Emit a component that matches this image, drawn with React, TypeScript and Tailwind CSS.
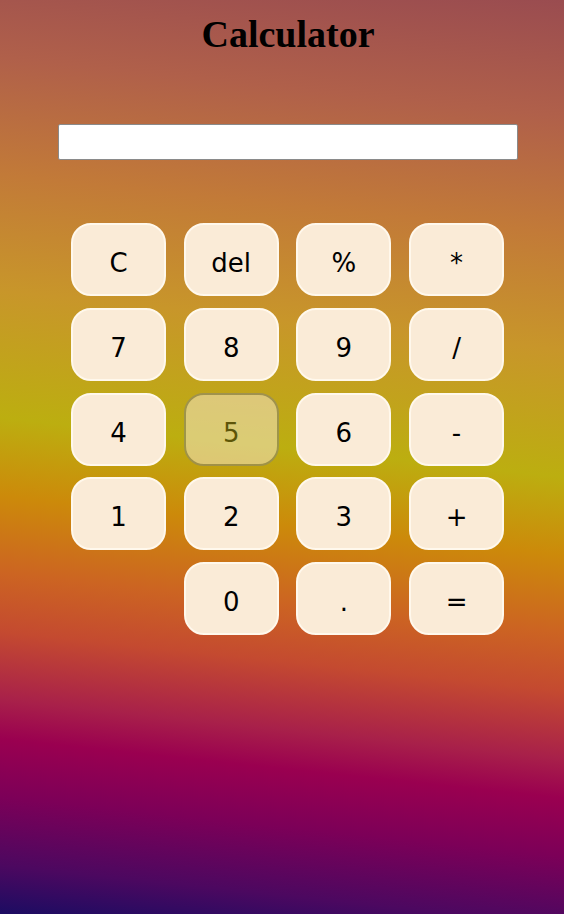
import React from "react";

const rows: (string | null)[][] = [
  ["C", "del", "%", "*"],
  ["7", "8", "9", "/"],
  ["4", "5", "6", "-"],
  ["1", "2", "3", "+"],
  [null, "0", ".", "="],
];

export default function App() {
  return (
    <div className="w-[564px] h-[914px] overflow-hidden bg-[linear-gradient(186deg,#9a4c50_0%,#b0604a_12%,#c27a38_24%,#c8962a_36%,#bcae10_49%,#cc8a0a_57%,#cc6422_65%,#c44a30_71%,#a8204a_78%,#9a0050_82%,#7c0058_88%,#4c0860_95%,#1c0c62_100%)]">
      <h1
        className="text-center font-bold text-[38px] leading-none pt-[15px] pl-[12px] text-black"
        style={{ fontFamily: '"Liberation Serif", "Times New Roman", serif' }}
      >
        Calculator
      </h1>
      <div className="mt-[71px] ml-[58px] w-[460px] h-[36px] bg-white border border-[#8a8a8a] rounded-[2px]" />
      <div
        className="mt-[63px] ml-[71px] grid grid-cols-[repeat(4,95px)] gap-x-[17.7px] gap-y-[11.8px]"
        style={{ fontFamily: '"DejaVu Sans", Verdana, sans-serif' }}
      >
        {rows.flat().map((k, i) =>
          k === null ? (
            <div key={i} />
          ) : (
            <button
              key={i}
              className={
                k === "5"
                  ? "h-[73px] rounded-[20px] border-2 border-[#808080] bg-[#faebd7] text-black text-[26px] opacity-50 flex items-center justify-center pt-[8px]"
                  : "h-[73px] rounded-[20px] border-2 border-[#fff8ec] bg-[#faebd7] text-black text-[26px] flex items-center justify-center pt-[8px]"
              }
            >
              {k}
            </button>
          )
        )}
      </div>
    </div>
  );
}
